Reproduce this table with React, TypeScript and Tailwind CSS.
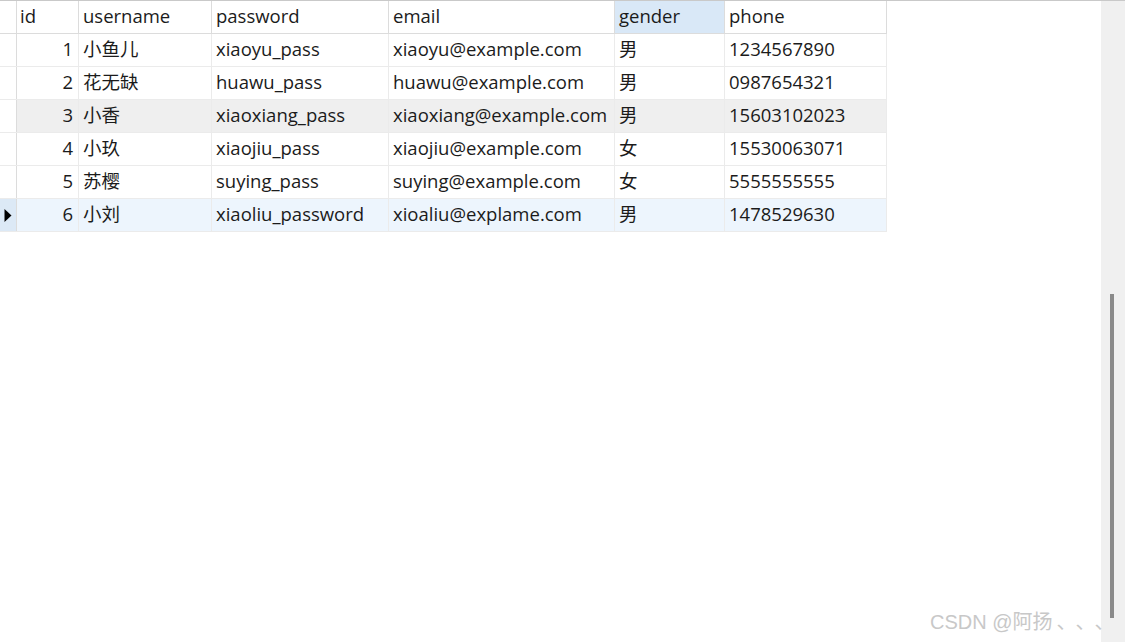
import React from 'react';

type Row = {
  id: number;
  username: string;
  password: string;
  email: string;
  gender: string;
  phone: string;
};

const ROWS: Row[] = [
  { id: 1, username: '小鱼儿', password: 'xiaoyu_pass', email: 'xiaoyu@example.com', gender: '男', phone: '1234567890' },
  { id: 2, username: '花无缺', password: 'huawu_pass', email: 'huawu@example.com', gender: '男', phone: '0987654321' },
  { id: 3, username: '小香', password: 'xiaoxiang_pass', email: 'xiaoxiang@example.com', gender: '男', phone: '15603102023' },
  { id: 4, username: '小玖', password: 'xiaojiu_pass', email: 'xiaojiu@example.com', gender: '女', phone: '15530063071' },
  { id: 5, username: '苏樱', password: 'suying_pass', email: 'suying@example.com', gender: '女', phone: '5555555555' },
  { id: 6, username: '小刘', password: 'xiaoliu_password', email: 'xioaliu@explame.com', gender: '男', phone: '1478529630' },
];

// column widths in px, matching the grid in the screenshot
const COLS = [
  { key: 'username', label: 'username', w: 'w-[133px]' },
  { key: 'password', label: 'password', w: 'w-[177px]' },
  { key: 'email', label: 'email', w: 'w-[226px]' },
  { key: 'gender', label: 'gender', w: 'w-[110px]' },
  { key: 'phone', label: 'phone', w: 'w-[162px]' },
] as const;

export default function App() {
  return (
    <div
      className="relative flex h-[642px] w-[1125px] overflow-hidden border-t border-[#c9c9c9] bg-white text-[18.5px] text-[#1b1b1b]"
      style={{ fontFamily: '"Open Sans", "Noto Sans CJK SC", sans-serif' }}
    >
      {/* 表格区域 */}
      <div className="flex-1">
        <div className="w-[887px]">
          {/* 表头 */}
          <div className="flex h-[33px] border-b border-[#dcdcdc]">
            <div className="w-[17px] shrink-0 border-r border-[#dcdcdc]" />
            <div className="flex w-[62px] shrink-0 items-center border-r border-[#dcdcdc] pb-[2px] pl-[3px]">id</div>
            {COLS.map((c) => (
              <div
                key={c.key}
                className={`flex ${c.w} shrink-0 items-center border-r border-[#dcdcdc] pb-[2px] pl-[4px] ${
                  c.key === 'gender' ? 'bg-[#d9e8f7]' : ''
                }`}
              >
                {c.label}
              </div>
            ))}
          </div>

          {/* 数据行 */}
          {ROWS.map((r) => {
            const selected = r.id === 6;
            const hover = r.id === 3;
            const rowBg = selected ? 'bg-[#edf5fd]' : hover ? 'bg-[#efefef]' : 'bg-white';
            return (
              <div key={r.id} className={`flex h-[33px] border-b border-[#ebebeb] ${rowBg}`}>
                <div
                  className={`flex w-[17px] shrink-0 items-center justify-center border-r border-[#dcdcdc] ${
                    selected ? 'bg-[#dce9f6]' : 'bg-white'
                  }`}
                >
                  {selected && (
                    <svg width="8" height="13" viewBox="0 0 8 13">
                      <path d="M0.5 0 L7.5 6.5 L0.5 13 Z" fill="#000" />
                    </svg>
                  )}
                </div>
                <div className="flex w-[62px] shrink-0 items-center justify-end border-r border-[#ebebeb] pb-[2px] pr-[5px]">
                  {r.id}
                </div>
                {COLS.map((c) => (
                  <div
                    key={c.key}
                    className={`flex ${c.w} shrink-0 items-center whitespace-nowrap border-r border-[#ebebeb] pb-[2px] pl-[4px]`}
                  >
                    {r[c.key]}
                  </div>
                ))}
              </div>
            );
          })}
        </div>
      </div>

      {/* 滚动条 */}
      <div className="flex w-[24px] shrink-0 flex-col bg-[#f0f0f0] pt-[293px] pl-[9px]">
        <div className="h-[324px] w-[4px] bg-[#8a8a8a]" />
      </div>

      {/* 水印 */}
      <div
        className="absolute bottom-[5px] left-[930px] whitespace-nowrap text-[20px] text-[#c8c8c8]"
        style={{ fontFamily: '"Liberation Sans", "Noto Sans CJK SC", sans-serif' }}
      >
        CSDN @阿扬<span className="ml-[4px] tracking-[9px]">、、、</span>
      </div>
    </div>
  );
}
